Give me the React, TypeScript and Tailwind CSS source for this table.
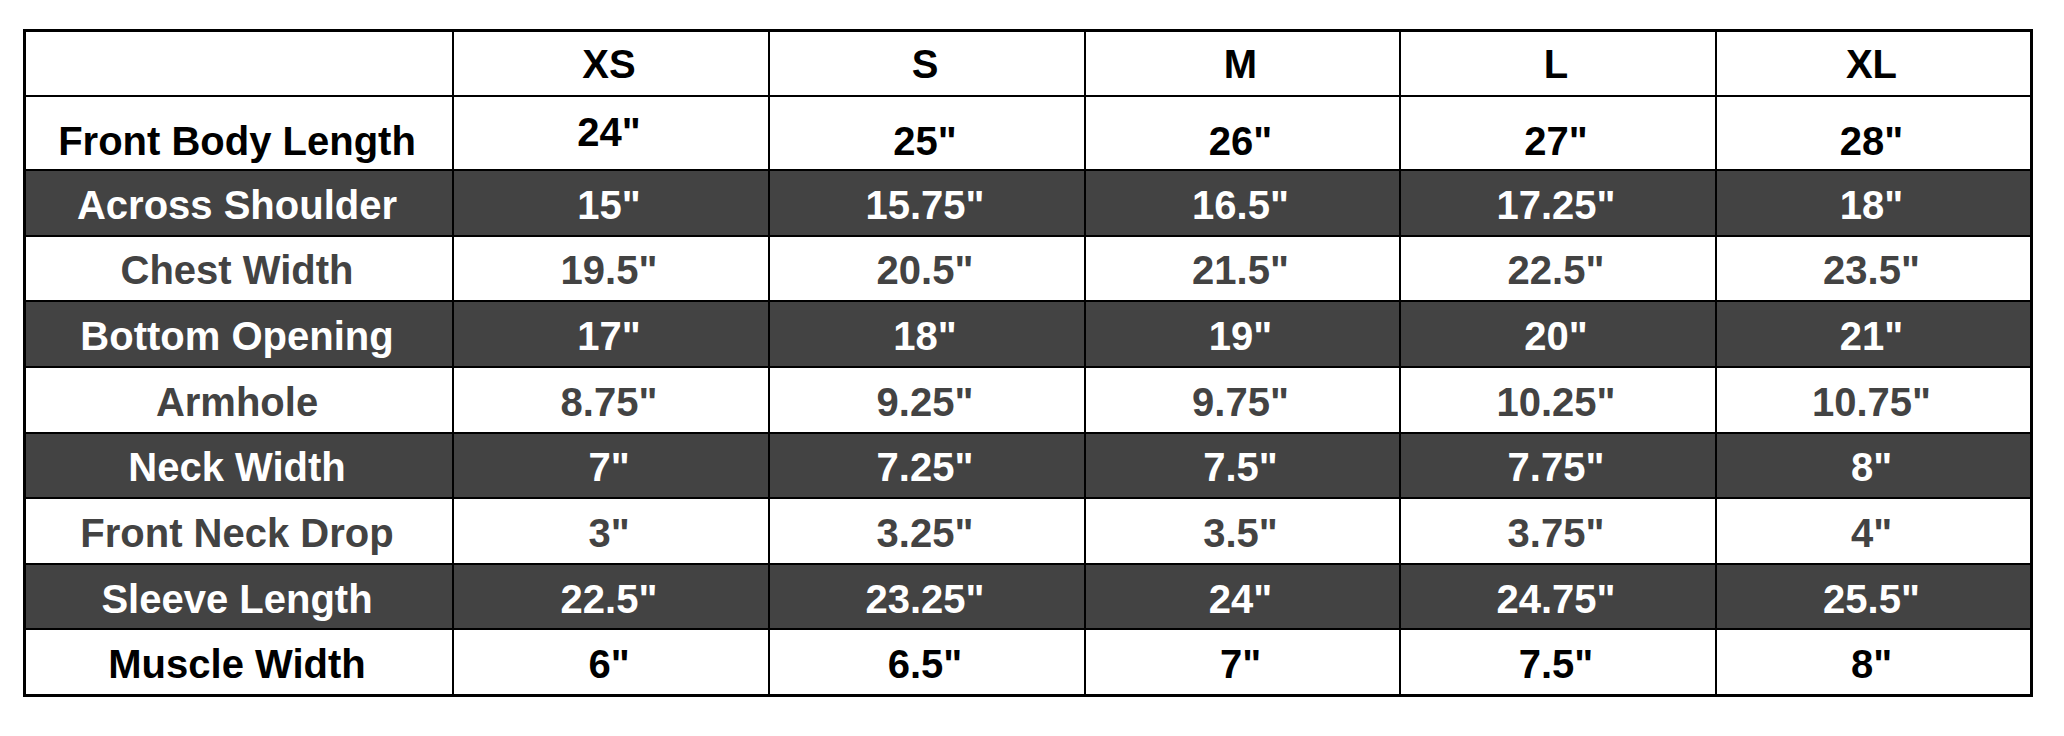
import React from 'react'

type Tone = 'head' | 'black' | 'gray' | 'dark'

interface SizeRow {
  label: string;
  values: string[];
  tone: Tone;
}

const sizes = ['XS', 'S', 'M', 'L', 'XL'];

const rows: SizeRow[] = [
  { label: 'Front Body Length', values: ['24"', '25"', '26"', '27"', '28"'], tone: 'black' },
  { label: 'Across Shoulder', values: ['15"', '15.75"', '16.5"', '17.25"', '18"'], tone: 'dark' },
  { label: 'Chest Width', values: ['19.5"', '20.5"', '21.5"', '22.5"', '23.5"'], tone: 'gray' },
  { label: 'Bottom Opening', values: ['17"', '18"', '19"', '20"', '21"'], tone: 'dark' },
  { label: 'Armhole', values: ['8.75"', '9.25"', '9.75"', '10.25"', '10.75"'], tone: 'gray' },
  { label: 'Neck Width', values: ['7"', '7.25"', '7.5"', '7.75"', '8"'], tone: 'dark' },
  { label: 'Front Neck Drop', values: ['3"', '3.25"', '3.5"', '3.75"', '4"'], tone: 'gray' },
  { label: 'Sleeve Length', values: ['22.5"', '23.25"', '24"', '24.75"', '25.5"'], tone: 'dark' },
  { label: 'Muscle Width', values: ['6"', '6.5"', '7"', '7.5"', '8"'], tone: 'black' },
];

const toneClass: Record<Tone, string> = {
  head: 'bg-white text-black',
  black: 'bg-white text-black',
  gray: 'bg-white text-[#434343]',
  dark: 'bg-[#434343] text-white',
};

const Cell: React.FC<{ tone: Tone; first?: boolean; extra?: string; children?: React.ReactNode }> = ({ tone, extra, children }) => (
  <div className={`flex justify-center pr-[4px] ${toneClass[tone]} ${extra ?? 'items-center pt-[4px]'}`}>
    <span className="leading-none whitespace-nowrap">{children}</span>
  </div>
)

const App: React.FC = () => {
  return (
    <div className="w-[2064px] h-[736px] bg-white pt-[29px] pl-[23px] font-['Liberation_Sans',Arial,sans-serif] font-bold text-[40px]">
      <div className="grid w-[2010px] h-[668px] gap-[2px] bg-black border-[3px] border-black grid-cols-[426px_314px_314px_313px_314px_313px] grid-rows-[63px_72px_repeat(8,1fr)]">
        {/* header */}
        <Cell tone="head" extra="items-center" />
        {sizes.map((s) => (
          <Cell key={s} tone="head" extra="items-center">{s}</Cell>
        ))}

        {rows.map((row, i) => (
          <React.Fragment key={row.label}>
            <Cell tone={row.tone} extra={i === 0 ? 'items-end pb-[8px]' : undefined}>
              {row.label}
            </Cell>
            {row.values.map((v, j) => (
              <Cell
                key={j}
                tone={row.tone}
                extra={i === 0 ? (j === 0 ? 'items-center pb-[3px] text-[#222222]' : 'items-end pb-[8px]') : undefined}
              >
                {v}
              </Cell>
            ))}
          </React.Fragment>
        ))}
      </div>
    </div>
  )
}

export default App
